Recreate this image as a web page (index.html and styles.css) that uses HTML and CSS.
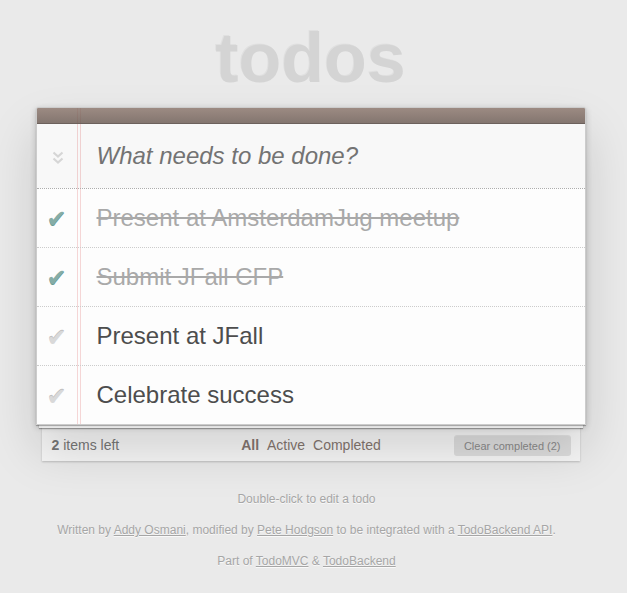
FILE: index.html
```html
<!DOCTYPE html>
<html lang="en">
<head>
<meta charset="utf-8">
<title>Todos</title>
<link rel="stylesheet" href="styles.css">
</head>
<body>
<div class="page">
  <h1 class="title">todos</h1>
  <section class="app">
    <div class="bar"></div>
    <div class="new-row">
      <span class="toggle-all">
        <svg width="12" height="14" viewBox="0 0 12 14"><polyline points="1.5,1.5 6,5.5 10.5,1.5" fill="none" stroke="#d6d6d6" stroke-width="2.2"/><polyline points="1.5,7.5 6,11.5 10.5,7.5" fill="none" stroke="#d6d6d6" stroke-width="2.2"/></svg>
      </span>
      <input class="new-todo" type="text" placeholder="What needs to be done?">
    </div>
    <ul class="list">
      <li class="item done"><span class="check">✔</span><span class="label">Present at AmsterdamJug meetup</span></li>
      <li class="item done"><span class="check">✔</span><span class="label">Submit JFall CFP</span></li>
      <li class="item"><span class="check">✔</span><span class="label">Present at JFall</span></li>
      <li class="item"><span class="check">✔</span><span class="label">Celebrate success</span></li>
    </ul>
  </section>
  <footer class="footer">
    <span class="count"><strong>2</strong> items left</span>
    <ul class="filters">
      <li><a class="selected" href="#/">All</a></li>
      <li><a href="#/active">Active</a></li>
      <li><a href="#/completed">Completed</a></li>
    </ul>
    <div class="clear-wrap"><button class="clear" type="button">Clear completed (2)</button></div>
  </footer>
  <div class="info">
    <p>Double-click to edit a todo</p>
    <p>Written by <a href="#">Addy Osmani</a>, modified by <a href="#">Pete Hodgson</a> to be integrated with a <a href="#">TodoBackend API</a>.</p>
    <p>Part of <a href="#">TodoMVC</a> &amp; <a href="#">TodoBackend</a></p>
  </div>
</div>
</body>
</html>
```

FILE: styles.css
```css
html, body {
  margin: 0;
  padding: 0;
}
body {
  background: #eaeaea;
  font: 14px "Liberation Sans", Arial, Helvetica, sans-serif;
  line-height: 19.6px;
  color: #4d4d4d;
  padding-right: 6px;
}
.page {
  width: 550px;
  margin: 0 auto;
  padding-top: 23px;
}
.title {
  margin: 0;
  font-size: 70px;
  line-height: 70px;
  font-weight: bold;
  text-align: center;
  color: #d4d4d4;
  text-shadow: -1px -1px 0 rgba(0, 0, 0, 0.04);
}
.app {
  position: relative;
  z-index: 1;
  margin-top: 14px;
  border: 1px solid #ccc;
  border-top-left-radius: 2px;
  border-top-right-radius: 2px;
  background:
    linear-gradient(to right, transparent 40px, #f5d6d6 40px, #f5d6d6 41px, transparent 41px, transparent 43px, #f5d6d6 43px, #f5d6d6 44px, transparent 44px),
    rgba(255, 255, 255, 0.9);
  box-shadow:
    0 1px 1px rgba(0, 0, 0, 0.3),
    0 6px 0 -3px rgba(255, 255, 255, 0.8),
    0 7px 1px -3px rgba(0, 0, 0, 0.3),
    0 2px 6px 0 rgba(0, 0, 0, 0.2),
    0 25px 50px 0 rgba(0, 0, 0, 0.15);
}
.bar {
  height: 15px;
  border-bottom: 1px solid #6c615c;
  background: linear-gradient(to bottom, rgba(132, 110, 100, 0.8), rgba(101, 84, 76, 0.8));
  border-top-left-radius: 1px;
  border-top-right-radius: 1px;
}
.new-row {
  display: flex;
  align-items: stretch;
  background: rgba(0, 0, 0, 0.02);
}
.toggle-all {
  width: 40px;
  display: flex;
  align-items: center;
  justify-content: center;
  padding-top: 3px;
}
.toggle-all svg {
  display: block;
  margin-left: 2px;
}
.new-todo {
  flex: 1;
  min-width: 0;
  margin: 0;
  border: 0;
  outline: none;
  background: transparent;
  font: 24px "Liberation Sans", Arial, Helvetica, sans-serif;
  line-height: 33px;
  height: 64px;
  box-sizing: border-box;
  padding: 15px 16px 16px 20px;
  color: #4d4d4d;
}
.new-todo::placeholder {
  font-style: italic;
  color: #737373;
}
.list {
  margin: 0;
  padding: 0;
  list-style: none;
  border-top: 1px dotted #adadad;
}
.item {
  display: flex;
  font-size: 24px;
  border-bottom: 1px dotted #ccc;
}
.item:last-child {
  border-bottom: none;
}
.check {
  width: 40px;
  flex: none;
  display: flex;
  align-items: center;
  justify-content: center;
  font-family: "DejaVu Sans", sans-serif;
  font-size: 24px;
  color: #d9d9d9;
  text-shadow: 0 -1px 0 #bfbfbf;
  padding-top: 5px;
}
.item.done .check {
  color: #85ada7;
  text-shadow: 0 1px 0 #669991;
  padding-top: 4px;
}
.label {
  display: block;
  margin-left: 5px;
  padding: 15px 60px 15px 15px;
  line-height: 28px;
  white-space: pre;
}
.item.done .label {
  color: #a9a9a9;
  text-decoration: line-through;
}
.footer {
  display: grid;
  grid-template-columns: 1fr auto 1fr;
  align-items: center;
  align-content: start;
  height: 36px;
  box-sizing: border-box;
  margin: 0 6px;
  padding: 11px 9px 0 10px;
  background: rgba(255, 255, 255, 0.55);
  box-shadow: 0 1px 2px rgba(0, 0, 0, 0.2);
  color: #777;
}
.count {
  text-align: left;
}
.filters {
  margin: 0;
  padding: 0;
  list-style: none;
  text-align: center;
}
.filters li {
  display: inline;
}
.filters a {
  color: #83756f;
  margin: 2px;
  text-decoration: none;
}
.filters a.selected {
  font-weight: bold;
}
.clear-wrap {
  display: flex;
  justify-content: flex-end;
}
.clear {
  border: 0;
  margin: 0;
  font: 11px "Liberation Sans", Arial, Helvetica, sans-serif;
  line-height: 20px;
  height: 20px;
  padding: 0 10px;
  color: #8a8a8a;
  background: rgba(0, 0, 0, 0.1);
  border-radius: 3px;
  box-shadow: 0 -1px 0 0 rgba(0, 0, 0, 0.08);
}
.info {
  margin-top: 29px;
  padding-right: 8px;
  color: #a6a6a6;
  font-size: 12px;
  text-align: center;
  text-shadow: 0 1px 0 rgba(255, 255, 255, 0.7);
}
.info p {
  margin: 0 0 12px;
  line-height: 19px;
}
.info a {
  color: inherit;
}
```
